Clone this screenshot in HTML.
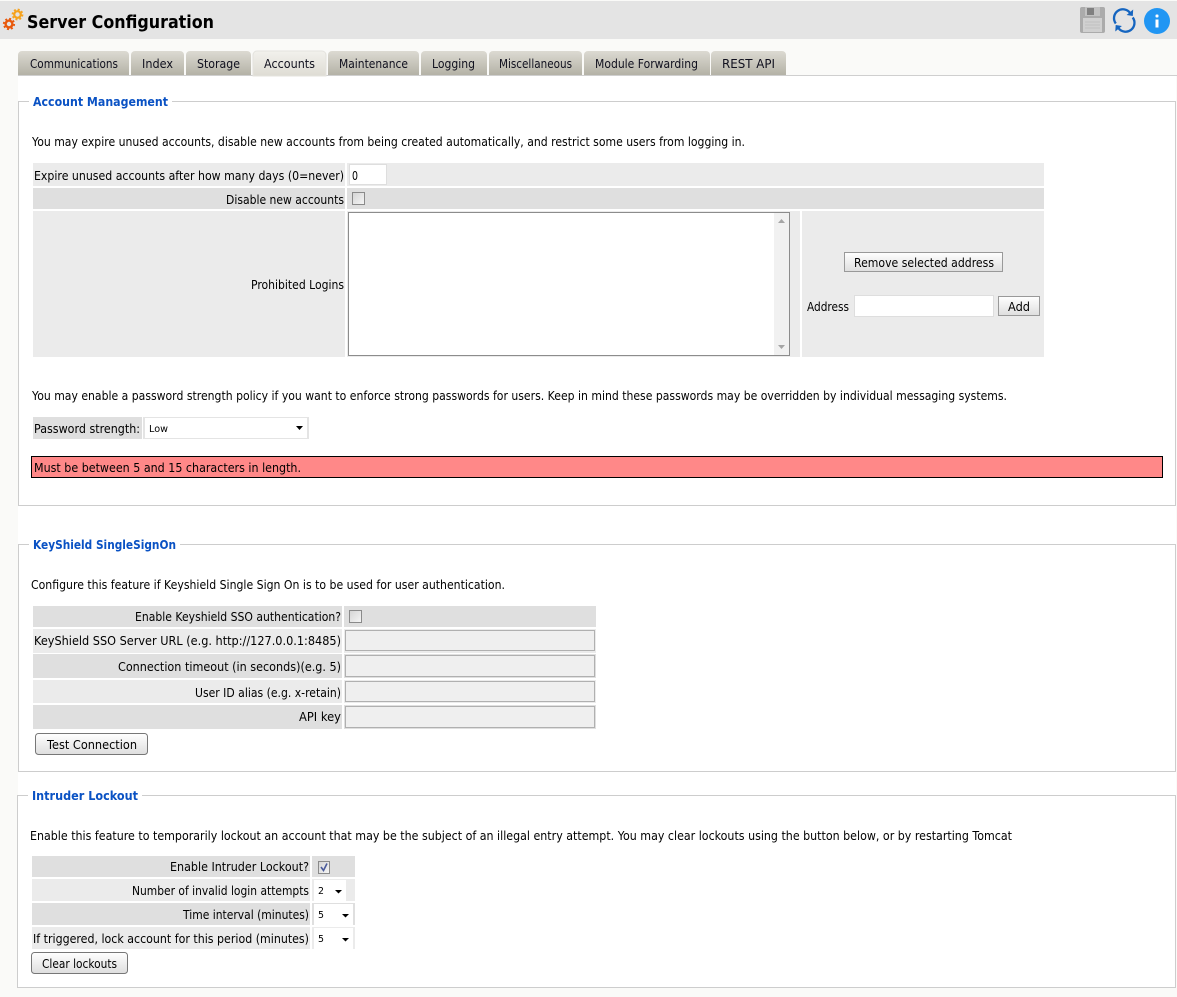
<!DOCTYPE html>
<html><head><meta charset="utf-8"><title>Server Configuration</title>
<style>
html,body{margin:0;padding:0;background:#fafaf8;width:1177px;height:997px;overflow:hidden}
svg{display:block;position:absolute;left:0;top:0}
text{font-family:"DejaVu Sans","Liberation Sans",sans-serif;font-size:12px;fill:#000;white-space:pre}
.b{font-weight:bold}
.l{font-weight:bold;fill:#0a52c4;font-size:12.5px}
.s{font-size:10px}
.tab{fill:#10101e}
</style></head><body>
<svg width="1177" height="997" viewBox="0 0 1177 997" xmlns="http://www.w3.org/2000/svg" shape-rendering="crispEdges">
<defs>
<linearGradient id="tg" x1="0" y1="0" x2="0" y2="1"><stop offset="0" stop-color="#dcdad2"/><stop offset="1" stop-color="#b4b2a6"/></linearGradient>
<linearGradient id="ta" x1="0" y1="0" x2="0" y2="1"><stop offset="0" stop-color="#f2f1ed"/><stop offset="1" stop-color="#dedcd4"/></linearGradient>
<linearGradient id="bg" x1="0" y1="0" x2="0" y2="1"><stop offset="0" stop-color="#fff"/><stop offset="1" stop-color="#dedede"/></linearGradient>
<linearGradient id="cb" x1="0" y1="0" x2="1" y2="1"><stop offset="0" stop-color="#d4d4d4"/><stop offset="1" stop-color="#f6f6f6"/></linearGradient>
</defs>
<rect x="0" y="1" width="1177" height="38" fill="#e4e4e4"/>
<rect x="18" y="75" width="1159" height="913" fill="#fff"/>
<rect x="1176" y="75" width="1" height="922" fill="#fafaf8"/>

<!-- gears -->
<g shape-rendering="auto">
<g fill="none" stroke="#e8590c"><circle cx="9" cy="24" r="3.4" stroke-width="2.4"/><circle cx="9" cy="24" r="5.2" stroke-width="1.8" stroke-dasharray="2 2.08"/></g>
<g fill="none" stroke="#f5a21c"><circle cx="17.500" cy="14.500" r="3.3" stroke-width="2.200"/><circle cx="17.500" cy="14.500" r="5" stroke-width="1.800" stroke-dasharray="2 1.93"/></g>
</g>
<text class="b" x="27" y="28" style="font-size:18px" textLength="187" lengthAdjust="spacingAndGlyphs">Server Configuration</text>

<!-- toolbar icons -->
<g shape-rendering="auto">
<rect x="1080" y="7" width="25" height="26" rx="2" fill="#ababab"/>
<rect x="1085" y="7" width="15" height="9" fill="#c2c2c2"/>
<rect x="1087" y="8" width="7" height="7" fill="#808080"/>
<rect x="1083" y="18" width="19" height="14" fill="#d0d0d0"/>
<path d="M1085 22h15M1085 25h15M1085 28h15" stroke="#c0c0c0" stroke-width="1"/>
<path d="M1115.800 23.500A8.800 8.800 0 0 1 1130 12.800" fill="none" stroke="#1565c0" stroke-width="2.300"/>
<path d="M1133.200 9.500L1132.800 16L1126.600 15Z" fill="#1565c0"/>
<path d="M1132.700 17.500A8.800 8.800 0 0 1 1118.500 28.200" fill="none" stroke="#1565c0" stroke-width="2.300"/>
<path d="M1115.300 31.500L1115.700 25L1121.900 26Z" fill="#1565c0"/>
<circle cx="1157" cy="21" r="13" fill="#2196f3"/>
<rect x="1155.500" y="14.500" width="3" height="3" rx="1" fill="#fff"/>
<rect x="1155.500" y="19.500" width="3" height="8" fill="#fff"/>
</g>

<!-- tabs -->
<rect x="18" y="75" width="1159" height="1" fill="#cfcfcf"/>
<g shape-rendering="auto">
<path d="M18 75V55a4 4 0 0 1 4-4H125a4 4 0 0 1 4 4V75Z" fill="url(#tg)"/>
<path d="M131 75V55a4 4 0 0 1 4-4H180a4 4 0 0 1 4 4V75Z" fill="url(#tg)"/>
<path d="M186 75V55a4 4 0 0 1 4-4H247a4 4 0 0 1 4 4V75Z" fill="url(#tg)"/>
<path d="M253 76V55a4 4 0 0 1 4-4H322a4 4 0 0 1 4 4V76Z" fill="url(#ta)" stroke="#e4e3de"/>
<path d="M328 75V55a4 4 0 0 1 4-4H415a4 4 0 0 1 4 4V75Z" fill="url(#tg)"/>
<path d="M421 75V55a4 4 0 0 1 4-4H483a4 4 0 0 1 4 4V75Z" fill="url(#tg)"/>
<path d="M489 75V55a4 4 0 0 1 4-4H578a4 4 0 0 1 4 4V75Z" fill="url(#tg)"/>
<path d="M584 75V55a4 4 0 0 1 4-4H706a4 4 0 0 1 4 4V75Z" fill="url(#tg)"/>
<path d="M711 75V55a4 4 0 0 1 4-4H782a4 4 0 0 1 4 4V75Z" fill="url(#tg)"/>
</g>
<text class="tab" x="30" y="68" textLength="88" lengthAdjust="spacingAndGlyphs">Communications</text>
<text class="tab" x="142" y="68" textLength="31" lengthAdjust="spacingAndGlyphs">Index</text>
<text class="tab" x="197" y="68" textLength="43" lengthAdjust="spacingAndGlyphs">Storage</text>
<text class="tab" x="264" y="68" textLength="51" lengthAdjust="spacingAndGlyphs">Accounts</text>
<text class="tab" x="339" y="68" textLength="69" lengthAdjust="spacingAndGlyphs">Maintenance</text>
<text class="tab" x="432" y="68" textLength="43" lengthAdjust="spacingAndGlyphs">Logging</text>
<text class="tab" x="499" y="68" textLength="73" lengthAdjust="spacingAndGlyphs">Miscellaneous</text>
<text class="tab" x="595" y="68" textLength="103" lengthAdjust="spacingAndGlyphs">Module Forwarding</text>
<text class="tab" x="722" y="68" textLength="53" lengthAdjust="spacingAndGlyphs">REST API</text>

<!-- fieldset 1 -->
<rect x="18.500" y="101.500" width="1157" height="404" fill="none" stroke="#cdcdcd"/>
<rect x="29" y="98" width="143" height="8" fill="#fff"/>
<text class="l" x="33" y="106" textLength="135" lengthAdjust="spacingAndGlyphs">Account Management</text>
<text x="32" y="146" textLength="713" lengthAdjust="spacingAndGlyphs">You may expire unused accounts, disable new accounts from being created automatically, and restrict some users from logging in.</text>

<rect x="33" y="163" width="312" height="23" fill="#ebebeb"/>
<rect x="347" y="163" width="697" height="23" fill="#ebebeb"/>
<rect x="33" y="188" width="312" height="21" fill="#dfdfdf"/>
<rect x="347" y="188" width="697" height="21" fill="#dfdfdf"/>
<rect x="33" y="211" width="312" height="146" fill="#ebebeb"/>
<rect x="347" y="211" width="453" height="146" fill="#ebebeb"/>
<rect x="802" y="211" width="242" height="146" fill="#ebebeb"/>

<text x="34" y="180" textLength="310" lengthAdjust="spacingAndGlyphs">Expire unused accounts after how many days (0=never)</text>
<rect x="349.500" y="164.500" width="37" height="20" fill="#fff" stroke="#dedede"/>
<text x="352" y="180" textLength="6" lengthAdjust="spacingAndGlyphs">0</text>
<text x="226" y="204" textLength="118" lengthAdjust="spacingAndGlyphs">Disable new accounts</text>
<rect x="352.500" y="192.500" width="12" height="12" fill="url(#cb)" stroke="#8a8a8a"/>
<text x="251" y="289" textLength="93" lengthAdjust="spacingAndGlyphs">Prohibited Logins</text>

<rect x="348.500" y="212.500" width="441" height="143" fill="#fff" stroke="#8c8c8c"/>
<rect x="774" y="213" width="15" height="142" fill="#f1f1f1"/>
<path d="M781.500 219l-3.500 4h7zM781.500 349l-3.500-4h7z" fill="#a5a5a5" shape-rendering="auto"/>

<rect x="844.500" y="252.500" width="158" height="19" fill="url(#bg)" stroke="#999"/>
<text x="854" y="267" textLength="140" lengthAdjust="spacingAndGlyphs">Remove selected address</text>
<text x="807" y="311" textLength="42" lengthAdjust="spacingAndGlyphs">Address</text>
<rect x="854.500" y="295.500" width="139" height="21" fill="#fff" stroke="#dedede"/>
<rect x="998.500" y="296.500" width="41" height="19" fill="url(#bg)" stroke="#999"/>
<text x="1008" y="311" textLength="22" lengthAdjust="spacingAndGlyphs">Add</text>

<text x="32" y="400" textLength="975" lengthAdjust="spacingAndGlyphs">You may enable a password strength policy if you want to enforce strong passwords for users. Keep in mind these passwords may be overridden by individual messaging systems.</text>
<rect x="33" y="417" width="109" height="22" fill="#dfdfdf"/>
<rect x="143" y="417" width="166" height="22" fill="#e4e4e4"/>
<rect x="145" y="418" width="162" height="20" fill="#fff"/>
<text x="34" y="433" textLength="106" lengthAdjust="spacingAndGlyphs">Password strength:</text>
<text class="s" x="149" y="432" textLength="19" lengthAdjust="spacingAndGlyphs">Low</text>
<path d="M296 426h7l-3.500 4z" fill="#000" shape-rendering="auto"/>

<rect x="31.500" y="456.500" width="1131" height="21" fill="#ff8888" stroke="#000"/>
<text x="34" y="472" textLength="267" lengthAdjust="spacingAndGlyphs">Must be between 5 and 15 characters in length.</text>

<!-- fieldset 2 -->
<rect x="18.500" y="544.500" width="1157" height="227" fill="none" stroke="#cdcdcd"/>
<rect x="29" y="541" width="151" height="8" fill="#fff"/>
<text class="l" x="33" y="549" textLength="143" lengthAdjust="spacingAndGlyphs">KeyShield SingleSignOn</text>
<text x="31" y="589" textLength="474" lengthAdjust="spacingAndGlyphs">Configure this feature if Keyshield Single Sign On is to be used for user authentication.</text>

<rect x="33" y="606" width="309" height="21" fill="#dfdfdf"/><rect x="344" y="606" width="252" height="21" fill="#dfdfdf"/>
<rect x="33" y="629" width="309" height="24" fill="#ebebeb"/><rect x="344" y="629" width="252" height="24" fill="#ebebeb"/>
<rect x="33" y="654" width="309" height="24" fill="#dfdfdf"/><rect x="344" y="654" width="252" height="24" fill="#dfdfdf"/>
<rect x="33" y="680" width="309" height="23" fill="#ebebeb"/><rect x="344" y="680" width="252" height="23" fill="#ebebeb"/>
<rect x="33" y="705" width="309" height="24" fill="#dfdfdf"/><rect x="344" y="705" width="252" height="24" fill="#dfdfdf"/>

<text x="135" y="621" textLength="206" lengthAdjust="spacingAndGlyphs">Enable Keyshield SSO authentication?</text>
<rect x="349.500" y="610.500" width="12" height="12" fill="url(#cb)" stroke="#8a8a8a"/>
<text x="34" y="645" textLength="307" lengthAdjust="spacingAndGlyphs">KeyShield SSO Server URL (e.g. http://127.0.0.1:8485)</text>
<rect x="345.500" y="630.500" width="249" height="20" fill="#efefef" stroke="#b0b0b0"/>
<text x="118" y="671" textLength="223" lengthAdjust="spacingAndGlyphs">Connection timeout (in seconds)(e.g. 5)</text>
<rect x="345.500" y="655.500" width="249" height="21" fill="#efefef" stroke="#b0b0b0"/>
<text x="195" y="697" textLength="146" lengthAdjust="spacingAndGlyphs">User ID alias (e.g. x-retain)</text>
<rect x="345.500" y="681.500" width="249" height="20" fill="#efefef" stroke="#b0b0b0"/>
<text x="299" y="721" textLength="42" lengthAdjust="spacingAndGlyphs">API key</text>
<rect x="345.500" y="706.500" width="249" height="21" fill="#efefef" stroke="#b0b0b0"/>

<rect x="35.500" y="733.500" width="112" height="21" rx="3" fill="url(#bg)" stroke="#777" shape-rendering="auto"/>
<text x="47" y="749" textLength="90" lengthAdjust="spacingAndGlyphs">Test Connection</text>

<!-- fieldset 3 -->
<rect x="17.500" y="795.500" width="1158" height="192" fill="none" stroke="#cdcdcd"/>
<rect x="28" y="792" width="114" height="8" fill="#fff"/>
<text class="l" x="32" y="800" textLength="106" lengthAdjust="spacingAndGlyphs">Intruder Lockout</text>
<text x="30" y="840" textLength="982" lengthAdjust="spacingAndGlyphs">Enable this feature to temporarily lockout an account that may be the subject of an illegal entry attempt. You may clear lockouts using the button below, or by restarting Tomcat</text>

<rect x="32" y="856" width="278" height="21" fill="#dfdfdf"/><rect x="312" y="856" width="43" height="21" fill="#dfdfdf"/>
<rect x="32" y="879" width="278" height="22" fill="#ebebeb"/><rect x="312" y="879" width="43" height="22" fill="#ebebeb"/>
<rect x="32" y="903" width="278" height="22" fill="#dfdfdf"/><rect x="312" y="903" width="43" height="22" fill="#dfdfdf"/>
<rect x="32" y="927" width="278" height="22" fill="#ebebeb"/><rect x="312" y="927" width="43" height="22" fill="#ebebeb"/>

<text x="170" y="871" textLength="139" lengthAdjust="spacingAndGlyphs">Enable Intruder Lockout?</text>
<rect x="318.500" y="861.500" width="11" height="12" fill="url(#cb)" stroke="#8a8a8a"/>
<path d="M321 867l2.500 3.500L327 863.500" fill="none" stroke="#4a5a9a" stroke-width="1.600" shape-rendering="auto"/>

<text x="132" y="895" textLength="177" lengthAdjust="spacingAndGlyphs">Number of invalid login attempts</text>
<rect x="314" y="880" width="32" height="21" fill="#fff"/>
<text class="s" x="318" y="894" textLength="6" lengthAdjust="spacingAndGlyphs">2</text>
<path d="M335 890h7l-3.500 3.500z" fill="#000" shape-rendering="auto"/>

<text x="183" y="919" textLength="126" lengthAdjust="spacingAndGlyphs">Time interval (minutes)</text>
<rect x="314" y="904" width="39" height="21" fill="#fff"/>
<text class="s" x="318" y="918" textLength="6" lengthAdjust="spacingAndGlyphs">5</text>
<path d="M342 914h7l-3.500 3.500z" fill="#000" shape-rendering="auto"/>

<text x="33" y="943" textLength="276" lengthAdjust="spacingAndGlyphs">If triggered, lock account for this period (minutes)</text>
<rect x="314" y="928" width="39" height="21" fill="#fff"/>
<text class="s" x="318" y="942" textLength="6" lengthAdjust="spacingAndGlyphs">5</text>
<path d="M342 938h7l-3.500 3.500z" fill="#000" shape-rendering="auto"/>

<rect x="31.500" y="952.500" width="96" height="21" rx="3" fill="url(#bg)" stroke="#777" shape-rendering="auto"/>
<text x="42" y="968" textLength="75" lengthAdjust="spacingAndGlyphs">Clear lockouts</text>
</svg>
</body></html>
